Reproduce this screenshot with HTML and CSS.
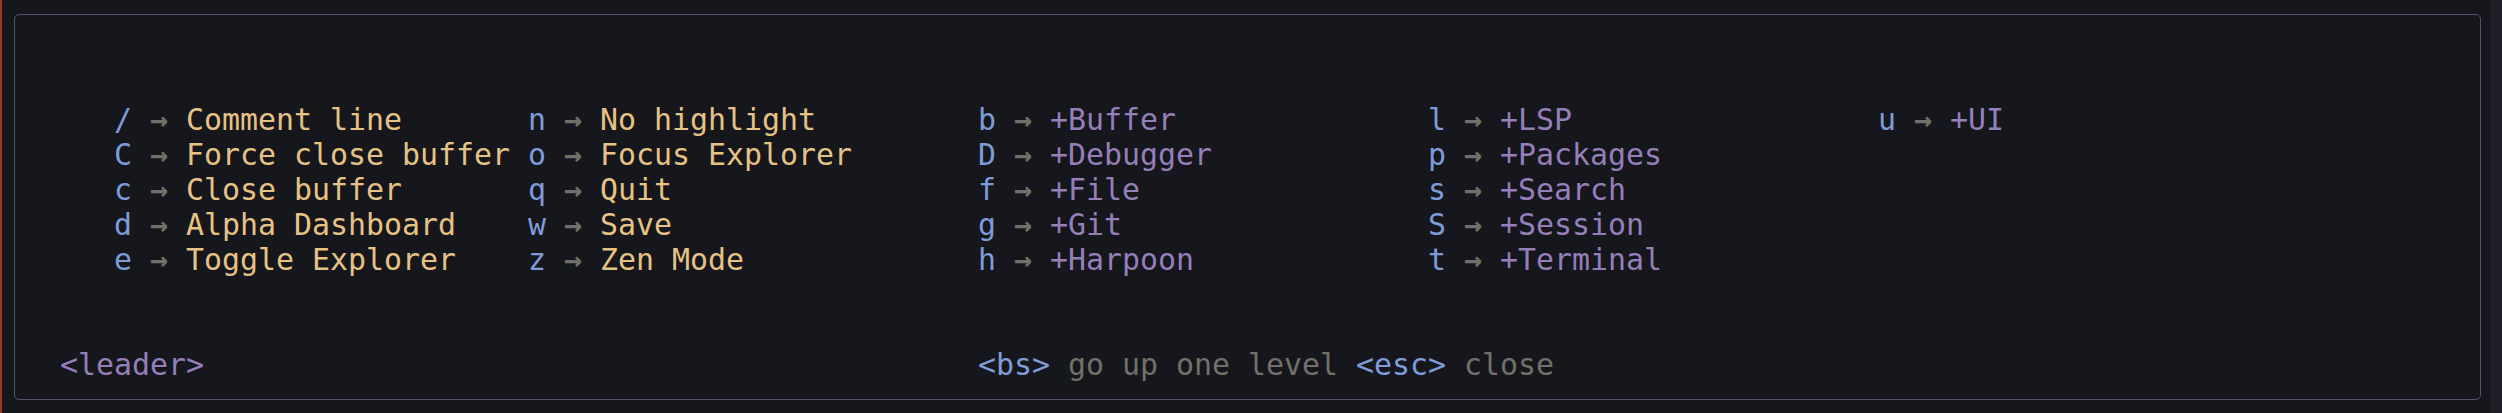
FILE: index.html
```html
<!DOCTYPE html>
<html>
<head>
<meta charset="utf-8">
<link rel="stylesheet" href="styles.css">
</head>
<body>
<div class="screen">
  <div class="edge"></div>
  <div class="main">
    <div class="float">
      <div class="cols">
        <div class="col w23">
          <div class="item"><span class="key">/</span><span class="arr"> → </span><span class="desc">Comment line</span></div>
          <div class="item"><span class="key">C</span><span class="arr"> → </span><span class="desc">Force close buffer</span></div>
          <div class="item"><span class="key">c</span><span class="arr"> → </span><span class="desc">Close buffer</span></div>
          <div class="item"><span class="key">d</span><span class="arr"> → </span><span class="desc">Alpha Dashboard</span></div>
          <div class="item"><span class="key">e</span><span class="arr"> → </span><span class="desc">Toggle Explorer</span></div>
        </div>
        <div class="col w25">
          <div class="item"><span class="key">n</span><span class="arr"> → </span><span class="desc">No highlight</span></div>
          <div class="item"><span class="key">o</span><span class="arr"> → </span><span class="desc">Focus Explorer</span></div>
          <div class="item"><span class="key">q</span><span class="arr"> → </span><span class="desc">Quit</span></div>
          <div class="item"><span class="key">w</span><span class="arr"> → </span><span class="desc">Save</span></div>
          <div class="item"><span class="key">z</span><span class="arr"> → </span><span class="desc">Zen Mode</span></div>
        </div>
        <div class="col w25">
          <div class="item"><span class="key">b</span><span class="arr"> → </span><span class="group">+Buffer</span></div>
          <div class="item"><span class="key">D</span><span class="arr"> → </span><span class="group">+Debugger</span></div>
          <div class="item"><span class="key">f</span><span class="arr"> → </span><span class="group">+File</span></div>
          <div class="item"><span class="key">g</span><span class="arr"> → </span><span class="group">+Git</span></div>
          <div class="item"><span class="key">h</span><span class="arr"> → </span><span class="group">+Harpoon</span></div>
        </div>
        <div class="col w25">
          <div class="item"><span class="key">l</span><span class="arr"> → </span><span class="group">+LSP</span></div>
          <div class="item"><span class="key">p</span><span class="arr"> → </span><span class="group">+Packages</span></div>
          <div class="item"><span class="key">s</span><span class="arr"> → </span><span class="group">+Search</span></div>
          <div class="item"><span class="key">S</span><span class="arr"> → </span><span class="group">+Session</span></div>
          <div class="item"><span class="key">t</span><span class="arr"> → </span><span class="group">+Terminal</span></div>
        </div>
        <div class="col">
          <div class="item"><span class="key">u</span><span class="arr"> → </span><span class="group">+UI</span></div>
        </div>
      </div>
      <div class="footer">
        <div class="crumb">&lt;leader&gt;</div>
        <div class="help"><span class="key">&lt;bs&gt;</span><span class="muted"> go up one level </span><span class="key">&lt;esc&gt;</span><span class="muted"> close</span></div>
      </div>
    </div>
  </div>
  <div class="side"></div>
</div>
</body>
</html>
```

FILE: styles.css
```css
html, body {
  margin: 0;
  padding: 0;
  background: #16161d;
}

.screen {
  display: flex;
  width: 2502px;
  height: 413px;
  overflow: hidden;
  font-family: "DejaVu Sans Mono", monospace;
  font-size: 29.9px;
  line-height: 35px;
}

.edge {
  width: 2px;
  background: #9a3a24;
  flex: none;
}

.main {
  flex: 1;
  padding: 14px 0 0 12px;
}

.side {
  width: 12px;
  flex: none;
  background: #1f1f28;
}

.float {
  width: 2467px;
  height: 386px;
  box-sizing: border-box;
  border: 1px solid #54546d;
  border-radius: 5px;
  padding: 86.5px 0 0 0;
}

.cols {
  display: flex;
  padding-left: 99px;
  height: 175px;
}

.col {
  display: flex;
  flex-direction: column;
}

.w23 { width: 414px; }
.w25 { width: 450px; }

.item {
  height: 35px;
  white-space: pre;
}

.key { color: #7e9cd8; }
.arr { color: #727169; font-weight: bold; }
.desc { color: #e6c384; }
.group { color: #957fb8; }
.muted { color: #727169; }

.footer {
  display: flex;
  margin-top: 70px;
  padding-left: 45px;
  height: 35px;
  white-space: pre;
}

.crumb {
  width: 918px;
  color: #957fb8;
}
```
